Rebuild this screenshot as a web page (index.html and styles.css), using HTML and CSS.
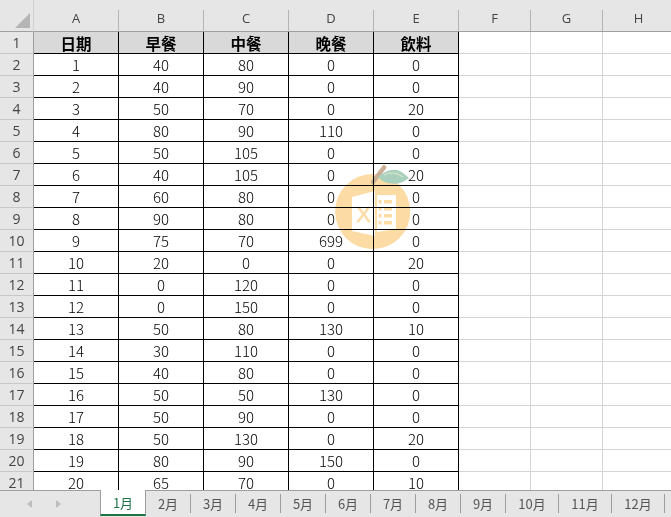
FILE: index.html
```html
<!DOCTYPE html>
<html lang="zh-Hant">
<head>
<meta charset="utf-8">
<title>1月</title>
<link rel="stylesheet" href="styles.css">
</head>
<body>
<div class="app">
<div class="sheet">
<table class="grid">
<colgroup><col class="c-row"><col class="c-data"><col class="c-data"><col class="c-data"><col class="c-data"><col class="c-data"><col class="c-empty"><col class="c-empty"><col class="c-empty"></colgroup>
<thead><tr>
<th class="corner"><svg class="tri" viewBox="0 0 15 15"><polygon points="15,0 15,15 0,15"/></svg></th>
<th class="col"><div>A</div></th><th class="col"><div>B</div></th><th class="col"><div>C</div></th><th class="col"><div>D</div></th><th class="col"><div>E</div></th><th class="col"><div>F</div></th><th class="col"><div>G</div></th><th class="col"><div>H</div></th>
</tr></thead>
<tbody>
<tr class="head"><th class="row">1</th><td>日期</td><td>早餐</td><td>中餐</td><td>晚餐</td><td>飲料</td><td class="e"></td><td class="e"></td><td class="e"></td></tr>
<tr><th class="row">2</th><td>1</td><td>40</td><td>80</td><td>0</td><td>0</td><td class="e"></td><td class="e"></td><td class="e"></td></tr>
<tr><th class="row">3</th><td>2</td><td>40</td><td>90</td><td>0</td><td>0</td><td class="e"></td><td class="e"></td><td class="e"></td></tr>
<tr><th class="row">4</th><td>3</td><td>50</td><td>70</td><td>0</td><td>20</td><td class="e"></td><td class="e"></td><td class="e"></td></tr>
<tr><th class="row">5</th><td>4</td><td>80</td><td>90</td><td>110</td><td>0</td><td class="e"></td><td class="e"></td><td class="e"></td></tr>
<tr><th class="row">6</th><td>5</td><td>50</td><td>105</td><td>0</td><td>0</td><td class="e"></td><td class="e"></td><td class="e"></td></tr>
<tr><th class="row">7</th><td>6</td><td>40</td><td>105</td><td>0</td><td>20</td><td class="e"></td><td class="e"></td><td class="e"></td></tr>
<tr><th class="row">8</th><td>7</td><td>60</td><td>80</td><td>0</td><td>0</td><td class="e"></td><td class="e"></td><td class="e"></td></tr>
<tr><th class="row">9</th><td>8</td><td>90</td><td>80</td><td>0</td><td>0</td><td class="e"></td><td class="e"></td><td class="e"></td></tr>
<tr><th class="row">10</th><td>9</td><td>75</td><td>70</td><td>699</td><td>0</td><td class="e"></td><td class="e"></td><td class="e"></td></tr>
<tr><th class="row">11</th><td>10</td><td>20</td><td>0</td><td>0</td><td>20</td><td class="e"></td><td class="e"></td><td class="e"></td></tr>
<tr><th class="row">12</th><td>11</td><td>0</td><td>120</td><td>0</td><td>0</td><td class="e"></td><td class="e"></td><td class="e"></td></tr>
<tr><th class="row">13</th><td>12</td><td>0</td><td>150</td><td>0</td><td>0</td><td class="e"></td><td class="e"></td><td class="e"></td></tr>
<tr><th class="row">14</th><td>13</td><td>50</td><td>80</td><td>130</td><td>10</td><td class="e"></td><td class="e"></td><td class="e"></td></tr>
<tr><th class="row">15</th><td>14</td><td>30</td><td>110</td><td>0</td><td>0</td><td class="e"></td><td class="e"></td><td class="e"></td></tr>
<tr><th class="row">16</th><td>15</td><td>40</td><td>80</td><td>0</td><td>0</td><td class="e"></td><td class="e"></td><td class="e"></td></tr>
<tr><th class="row">17</th><td>16</td><td>50</td><td>50</td><td>130</td><td>0</td><td class="e"></td><td class="e"></td><td class="e"></td></tr>
<tr><th class="row">18</th><td>17</td><td>50</td><td>90</td><td>0</td><td>0</td><td class="e"></td><td class="e"></td><td class="e"></td></tr>
<tr><th class="row">19</th><td>18</td><td>50</td><td>130</td><td>0</td><td>20</td><td class="e"></td><td class="e"></td><td class="e"></td></tr>
<tr><th class="row">20</th><td>19</td><td>80</td><td>90</td><td>150</td><td>0</td><td class="e"></td><td class="e"></td><td class="e"></td></tr>
<tr><th class="row">21</th><td>20</td><td>65</td><td>70</td><td>0</td><td>10</td><td class="e"></td><td class="e"></td><td class="e"></td></tr>
</tbody>
</table>
<svg class="mark" viewBox="0 0 120 110">
<circle cx="52.7" cy="61.600" r="37.600" fill="#fcdca4"/>
<path d="M53 32 L64 17.500" stroke="#c9ae96" stroke-width="4.500" stroke-linecap="round" fill="none"/>
<path d="M58 27 Q70 17 80 21 Q85 24 89 28 Q80 35 72 33.500 Q63 33 58 27Z" fill="#a9cfbd"/>
<path d="M64 25 Q73 20 83 27" stroke="#e3eccb" stroke-width="1" fill="none"/>
<polygon points="32,47 55,41 55,86 32,81" fill="#fff"/>
<text x="43.700" y="71.700" class="mark-x">X</text>
<polygon points="57,45 76,45 76,79 57,82" fill="#fff"/>
<path d="M64 50h8v3.500h-8zM64 57h8v3.500h-8zM64 64h8v3.500h-8zM64 71h8v3.500h-8zM58.500 50h3v3.500h-3zM58.500 57h3v3.500h-3zM58.500 64h3v3.500h-3zM58.500 71h3v3.500h-3z" fill="#fcdca4"/>
</svg>
</div>
<div class="tabs">
<div class="nav"><svg class="arrow" viewBox="0 0 5 8"><polygon points="5,0 5,8 0,4"/></svg><svg class="arrow" viewBox="0 0 5 8"><polygon points="0,0 0,8 5,4"/></svg></div>
<div class="tab active">1月</div>
<div class="tab">2月</div><div class="tab">3月</div><div class="tab">4月</div><div class="tab">5月</div><div class="tab">6月</div><div class="tab">7月</div><div class="tab">8月</div><div class="tab">9月</div>
<div class="tab wide">10月</div><div class="tab wide">11月</div><div class="tab wide">12月</div>
</div>
</div>
</body>
</html>
```
FILE: styles.css
```css
* { box-sizing: border-box; }
html, body { margin: 0; padding: 0; }
body { background: #fff; overflow: hidden; }
.app { width: 671px; height: 517px; display: flex; flex-direction: column; overflow: hidden; }
.sheet { position: relative; height: 490px; flex: none; overflow: hidden; }
.grid { border-collapse: separate; border-spacing: 0; table-layout: fixed; width: 675px; }
.c-row { width: 34px; }
.c-data { width: 85px; }
.c-empty { width: 72px; }
thead th { height: 32px; padding: 0; background: #e6e6e6; border-bottom: 1px solid #9f9f9f; vertical-align: bottom; }
.corner { border-right: 1px solid #d0d0d0; }
.tri { display: block; width: 15px; height: 15px; margin: 0 3px 3px auto; }
.tri polygon { fill: #b5b5b5; }
.col div { height: 21px; border-right: 1px solid #b4b4b4; font: 400 13px/17px "Open Sans", sans-serif; color: #444; text-align: center; }
.row { height: 22px; padding: 1px 0 0; background: #e6e6e6; border-right: 1px solid #9f9f9f; border-bottom: 1px solid #c8c8c8; font: 400 14px/20px "Open Sans", sans-serif; color: #444; text-align: center; }
td { height: 22px; padding: 1px 0 0; border-right: 1px solid #000; border-bottom: 1px solid #000; font: 300 15px/20px "Noto Sans CJK TC", sans-serif; color: #000; text-align: center; overflow: hidden; white-space: nowrap; }
td.e { border-right: 1px solid #d4d4d4; border-bottom: 1px solid #d4d4d4; }
.head td { background: #d9d9d9; font: 700 15.500px/20px "Noto Sans CJK TC", sans-serif; }
.head td.e { background: #fff; }
.mark { position: absolute; left: 320px; top: 150px; width: 120px; height: 110px; mix-blend-mode: multiply; }
.mark-x { font: 400 22px "Liberation Sans", sans-serif; fill: #fcdca4; stroke: #fcdca4; stroke-width: 0.6px; text-anchor: middle; }
.tabs { flex: 1; display: flex; background: #e6e6e6; border-top: 1px solid #9f9f9f; }
.nav { width: 100px; display: flex; gap: 24px; padding: 8px 0 0 27px; }
.arrow { width: 5px; height: 8px; margin-top: 1px; }
.arrow polygon { fill: #bdbdbd; }
.tab { width: 45px; height: 19px; margin-top: 3px; border-right: 1px solid #9f9f9f; font: 400 13px/19px "Noto Sans CJK TC", sans-serif; color: #555; text-align: center; }
.tab.wide { width: 53px; }
.tab.active { width: 46px; height: 26px; margin-top: -1px; background: #fff; color: #217346; border-left: 1px solid #9f9f9f; border-bottom: 2px solid #217346; line-height: 25px; }
```
